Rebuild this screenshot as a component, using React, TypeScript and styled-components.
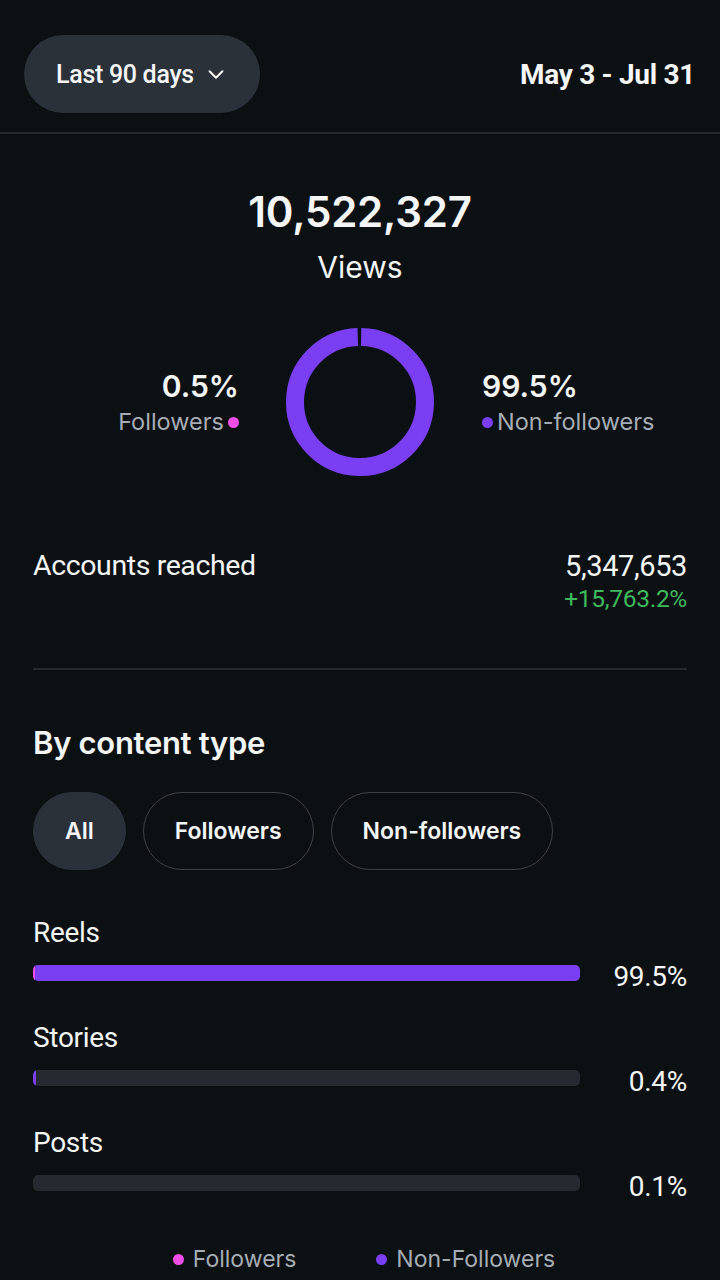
import React from "react";
import styled, { createGlobalStyle } from "styled-components";

const PINK = "#f04ee8";
const PURPLE = "#7a3ff2";
const TRACK = "#242a2f";

const GlobalStyle = createGlobalStyle`
    html, body {
        margin: 0;
        padding: 0;
        background: #0b1013;
    }
    * { box-sizing: border-box; }
`;

const Page = styled.div`
    width: 720px;
    height: 1280px;
    overflow: hidden;
    background: #0b1013;
    color: #f5f6f7;
    font-family: Inter, "Noto Sans", sans-serif;
`;

const TopBar = styled.div`
    display: flex;
    align-items: center;
    justify-content: space-between;
    padding: 36px 25px 20px 24px;
    height: 134px;
    border-bottom: 2px solid #23292d;
`;

const RangeButton = styled.button`
    height: 78px;
    padding: 0 33px 0 32px;
    border: none;
    border-radius: 39px;
    background: #2a3139;
    color: #f5f6f7;
    display: flex;
    align-items: center;
    gap: 11px;
    font-family: Roboto, sans-serif;
    font-size: 25px;
    font-weight: 500;
    letter-spacing: -0.3px;
`;

const DateText = styled.div`
    font-family: Roboto, sans-serif;
    font-size: 28px;
    font-weight: 700;
    letter-spacing: -0.3px;
`;

const Hero = styled.div`
    display: flex;
    flex-direction: column;
    align-items: center;
    padding-top: 52px;
`;

const BigNumber = styled.div`
    font-size: 42px;
    font-weight: 600;
    line-height: 52px;
    letter-spacing: -0.2px;
`;

const BigLabel = styled.div`
    font-size: 30px;
    line-height: 40px;
    margin-top: 9px;
`;

const Split = styled.div`
    display: grid;
    grid-template-columns: 1fr 148px 1fr;
    column-gap: 48px;
    align-items: center;
    width: 100%;
    margin-top: 41px;
`;

const SplitSide = styled.div<{ $right?: boolean }>`
    display: flex;
    flex-direction: column;
    align-items: ${(p) => (p.$right ? "flex-start" : "flex-end")};
    margin-top: 2px;
    margin-right: ${(p) => (p.$right ? "0" : "-1px")};
`;

const Percent = styled.div`
    font-size: 30px;
    font-weight: 600;
    line-height: 38px;
`;

const SubLabel = styled.div`
    display: flex;
    align-items: center;
    gap: 4px;
    color: #a7adb4;
    font-size: 23.5px;
    line-height: 34px;
`;

const Dot = styled.span<{ $color: string }>`
    width: 11px;
    height: 11px;
    border-radius: 50%;
    background: ${(p) => p.$color};
    display: inline-block;
`;

const Body = styled.div`
    padding: 0 33px;
`;

const ReachRow = styled.div`
    display: flex;
    justify-content: space-between;
    align-items: flex-start;
    margin-top: 72px;
    padding-bottom: 54px;
    border-bottom: 2px solid #23292d;
    font-family: Roboto, sans-serif;
`;

const ReachLabel = styled.div`
    font-size: 28.5px;
    line-height: 36px;
    letter-spacing: -0.4px;
`;

const ReachValues = styled.div`
    display: flex;
    flex-direction: column;
    align-items: flex-end;
`;

const ReachValue = styled.div`
    font-size: 29px;
    line-height: 36px;
    letter-spacing: -0.4px;
`;

const Growth = styled.div`
    color: #3fb95e;
    font-size: 24.5px;
    line-height: 30px;
    letter-spacing: -0.3px;
`;

const SectionTitle = styled.h2`
    margin: 54px 0 0;
    font-size: 31px;
    font-weight: 600;
    line-height: 38px;
    letter-spacing: -0.3px;
`;

const Chips = styled.div`
    display: flex;
    gap: 17px;
    margin-top: 30px;
`;

const Chip = styled.div<{ $active?: boolean }>`
    height: 78px;
    padding: 0 31px;
    border-radius: 39px;
    display: flex;
    align-items: center;
    font-size: 23px;
    font-weight: 600;
    background: ${(p) => (p.$active ? "#2a3139" : "transparent")};
    border: 1.5px solid ${(p) => (p.$active ? "#2a3139" : "#3b4247")};
`;

const Rows = styled.div`
    display: flex;
    flex-direction: column;
    margin-top: 46px;
    gap: 27px;
    font-family: Roboto, sans-serif;
`;

const Row = styled.div`
    display: flex;
    flex-direction: column;
`;

const RowLabel = styled.div`
    font-size: 28px;
    line-height: 34px;
    letter-spacing: -0.3px;
`;

const BarLine = styled.div`
    display: flex;
    align-items: center;
    justify-content: space-between;
    margin-top: 2px;
`;

const Track = styled.div`
    width: 547px;
    height: 16px;
    border-radius: 5px;
    background: ${TRACK};
    display: flex;
    overflow: hidden;
`;

const Seg = styled.div<{ $color: string }>`
    height: 100%;
    background: ${(p) => p.$color};
`;

const RowValue = styled.div`
    font-size: 28px;
    line-height: 34px;
    letter-spacing: -0.3px;
    margin-top: 8px;
`;

const Legend = styled.div`
    display: flex;
    justify-content: center;
    gap: 80px;
    margin-top: 41px;
    margin-left: 8px;
`;

const LegendItem = styled.div`
    display: flex;
    align-items: center;
    gap: 9px;
    color: #a7adb4;
    font-size: 23px;
`;

const Chevron = () => (
    <svg width="22" height="22" viewBox="0 0 24 24" fill="none" stroke="#f5f6f7" strokeWidth="2.2" strokeLinecap="round" strokeLinejoin="round">
        <path d="M5 9l7 7 7-7" />
    </svg>
);

// donut with a tiny gap for the followers share
const Donut = () => {
    const r = 65;
    const c = 2 * Math.PI * r;
    const gap = c * 0.01;
    return (
        <svg width="148" height="148" viewBox="0 0 148 148">
            <circle
                cx="74"
                cy="74"
                r={r}
                fill="none"
                stroke={PURPLE}
                strokeWidth="18"
                strokeDasharray={`${c - gap} ${gap}`}
                transform="rotate(-89 74 74)"
            />
        </svg>
    );
};

const rows = [
    { name: "Reels", followers: 0.4, others: 99.6, value: "99.5%" },
    { name: "Stories", followers: 0, others: 0.5, value: "0.4%" },
    { name: "Posts", followers: 0, others: 0, value: "0.1%" },
];

const App = () => {
    return (
        <Page>
            <GlobalStyle />
            <TopBar>
                <RangeButton>
                    Last 90 days <Chevron />
                </RangeButton>
                <DateText>May 3 - Jul 31</DateText>
            </TopBar>

            <Hero>
                <BigNumber>10,522,327</BigNumber>
                <BigLabel>Views</BigLabel>
                <Split>
                    <SplitSide>
                        <Percent>0.5%</Percent>
                        <SubLabel>Followers<Dot $color={PINK} /></SubLabel>
                    </SplitSide>
                    <Donut />
                    <SplitSide $right>
                        <Percent>99.5%</Percent>
                        <SubLabel><Dot $color={PURPLE} />Non-followers</SubLabel>
                    </SplitSide>
                </Split>
            </Hero>

            <Body>
                <ReachRow>
                    <ReachLabel>Accounts reached</ReachLabel>
                    <ReachValues>
                        <ReachValue>5,347,653</ReachValue>
                        <Growth>+15,763.2%</Growth>
                    </ReachValues>
                </ReachRow>

                <SectionTitle>By content type</SectionTitle>
                <Chips>
                    <Chip $active>All</Chip>
                    <Chip>Followers</Chip>
                    <Chip>Non-followers</Chip>
                </Chips>

                <Rows>
                    {rows.map((row) => (
                        <Row key={row.name}>
                            <RowLabel>{row.name}</RowLabel>
                            <BarLine>
                                <Track>
                                    {row.followers > 0 && <Seg $color={PINK} style={{ width: row.followers + "%" }} />}
                                    {row.others > 0 && <Seg $color={PURPLE} style={{ width: row.others + "%" }} />}
                                </Track>
                                <RowValue>{row.value}</RowValue>
                            </BarLine>
                        </Row>
                    ))}
                </Rows>

                <Legend>
                    <LegendItem><Dot $color={PINK} />Followers</LegendItem>
                    <LegendItem><Dot $color={PURPLE} />Non-Followers</LegendItem>
                </Legend>
            </Body>
        </Page>
    );
};

export default App;
